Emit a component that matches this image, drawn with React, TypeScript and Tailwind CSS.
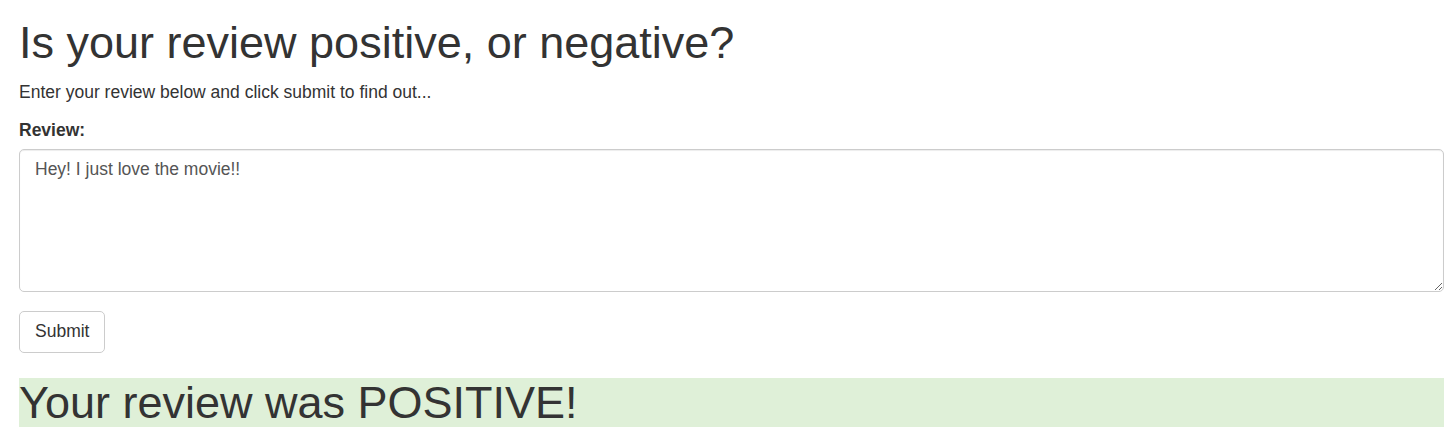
import { useState } from 'react'

export default function App() {
  const [review, setReview] = useState('Hey! I just love the movie!!')

  return (
    <div className="bg-white pl-[19px] pr-[11px] pb-[11px] font-['Liberation_Sans',Arial,sans-serif] text-[17.5px] leading-[25px] text-[#333]">
      <h1 className="pt-[18px] mb-[12.5px] text-[45px] leading-[49.5px] font-normal">
        Is your review positive, or negative?
      </h1>
      <p className="mb-[12.5px]">Enter your review below and click submit to find out...</p>

      <form onSubmit={(e) => e.preventDefault()}>
        <div className="mb-[19px]">
          <label htmlFor="review" className="mb-[6px] inline-block font-bold">
            Review:
          </label>
          <textarea
            id="review"
            rows={5}
            value={review}
            onChange={(e) => setReview(e.target.value)}
            className="block h-[143px] w-full rounded-[5px] border border-[#ccc] bg-white px-[15px] py-[7.5px] text-[17.5px] leading-[25px] text-[#555] shadow-[inset_0_1px_1px_rgba(0,0,0,0.075)] focus:outline-none"
          />
        </div>
        <button
          type="submit"
          className="h-[42px] rounded-[5px] border border-[#ccc] bg-white px-[15px] text-[17.5px] leading-[25px] text-[#333]"
        >
          Submit
        </button>
      </form>

      <h1 className="mt-[25px] bg-[#dff0d8] text-[45px] leading-[49.5px] font-normal">
        Your review was POSITIVE!
      </h1>
    </div>
  )
}
